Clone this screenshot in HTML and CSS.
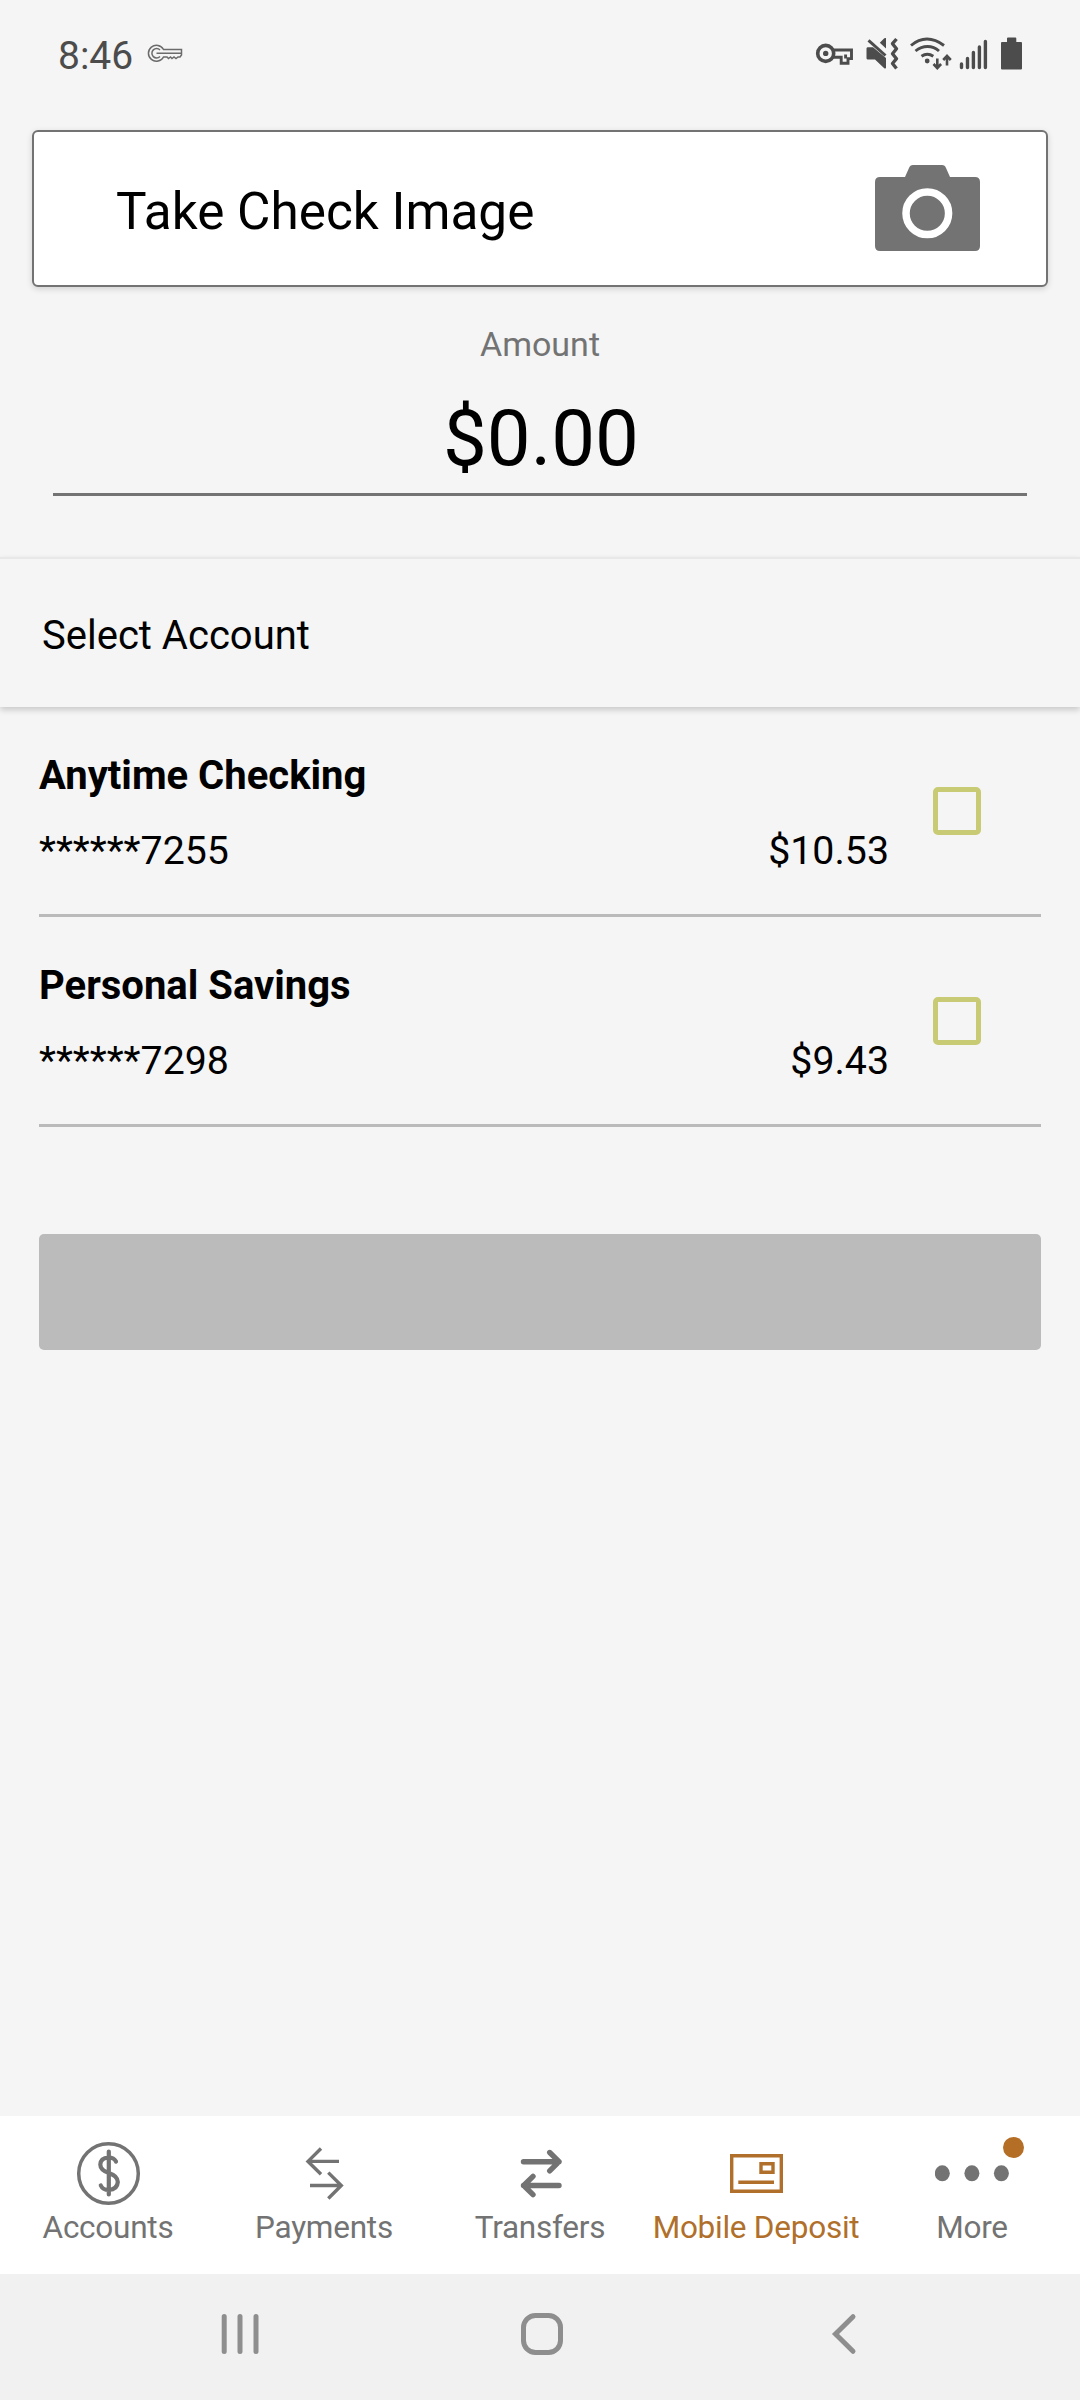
FILE: index.html
```html
<!DOCTYPE html>
<html lang="en">

<head>
    <meta charset="UTF-8">
    <meta name="viewport" content="width=device-width, initial-scale=1.0">
    <title>Mobile Deposit</title>
    <link rel="stylesheet" href="styles.css">
</head>

<body>

    <!-- Status bar -->
    <header class="status-bar">
        <span class="time">8:46</span>
        <svg class="key-outline" width="37" height="20" viewBox="0 0 37 20">
            <path d="M16.5 6.500A8 8 0 1 0 16.500 14H20l1.500 1.500L23.500 14l1.500 1.500L27 14l2 1.500L31 14h2l1.500-2V6.500z" />
            <path d="M13 7a4.700 4.700 0 1 0 0 6.500M9.500 10.300H34" />
        </svg>
        <div class="status-icons">
            <svg width="47" height="36" viewBox="0 0 47 36">
                <circle cx="10.700" cy="18.400" r="8" class="line" stroke-width="3.600" />
                <circle cx="10.700" cy="18.400" r="2.700" />
                <path d="M18 15H36.500V23.600H33V28.200H26.200V22.300H18M30.600 19.500v4" class="line" stroke-width="2.900" />
            </svg>
            <svg width="44" height="36" viewBox="0 0 44 36">
                <path d="M5.500 12.200h5.500L24 23v10.300l-1.500.3L13 24.500H5.500q-1-.2-1-1.200V13.400q0-1 1-1.200zM24 3v10.500L17.800 7.700l4.500-4.400z" />
                <path d="M6.500 5.300L23.500 20.500" class="line" stroke-width="3" />
                <path d="M34.500 4L30.500 8.700l4 5-4 5 4 5-4 4.800 4 5" class="line" stroke-width="3.400" stroke-linejoin="round" />
            </svg>
            <svg width="50" height="36" viewBox="0 0 50 36">
                <path d="M5 10.500Q12.500 4 21 4t17 6.500M9.500 16Q15 11.500 21.500 11.500T33 16M15.500 21.300Q21.300 17.200 27.300 21.300" class="line" stroke-width="2.900" />
                <circle cx="21.200" cy="26" r="2.400" />
                <path d="M31.300 23.500v9M27.500 29l3.800 4 3.800-4M41 30.500v-9M37.200 25l3.800-4 3.800 4" class="line" stroke-width="2.600" />
            </svg>
            <svg width="39" height="36" viewBox="0 0 39 36">
                <path d="M5.500 29v3.500M11.500 23.500v9M17.400 17.500v15M23.400 12v20.500M29.400 6.500v26" class="line" stroke-width="3.400" stroke-linecap="round" />
            </svg>
            <svg width="30" height="36" viewBox="0 0 30 36">
                <path d="M12 7V3.500q0-1 1-1h7.300q1 0 1 1V7H26q1 0 1 1v25.500q0 1-1 1H7q-1 0-1-1V8q0-1 1-1z" />
            </svg>
        </div>
    </header>

    <main>
        <!-- Check image -->
        <button type="button" class="check-card">
            <span>Take Check Image</span>
            <svg width="105" height="87" viewBox="0 0 105 87">
                <path d="M5 12h25l4-9q1-3 4-3h29q3 0 4 3l4 9h25q5 0 5 5v64q0 5-5 5H5q-5 0-5-5V17q0-5 5-5z" fill="#737373" />
                <circle cx="52.300" cy="48.300" r="21.300" fill="none" stroke="#fff" stroke-width="7.500" />
            </svg>
        </button>

        <!-- Amount -->
        <section class="amount">
            <div class="amount-label">Amount</div>
            <div class="amount-value">$0.00</div>
        </section>

        <!-- Accounts -->
        <h2 class="select-header">Select Account</h2>

        <div class="accounts">
            <div class="account">
                <div class="account-details">
                    <div class="account-name">Anytime Checking</div>
                    <div class="account-line">
                        <span>******7255</span>
                        <span>$10.53</span>
                    </div>
                </div>
                <div class="checkbox"></div>
            </div>
            <div class="account">
                <div class="account-details">
                    <div class="account-name">Personal Savings</div>
                    <div class="account-line">
                        <span>******7298</span>
                        <span>$9.43</span>
                    </div>
                </div>
                <div class="checkbox"></div>
            </div>
        </div>

        <button type="button" class="btn-submit" disabled></button>
    </main>

    <!-- Tabs -->
    <nav class="tabs">
        <a class="tab">
            <svg width="72" height="72" viewBox="0 0 72 72" stroke-width="3.500">
                <circle cx="36.500" cy="36.500" r="29.800" />
                <path d="M36.800 14.500v43M44 24.500q-2-4-7.500-4-8 .5-8.200 7 0 5.500 8.500 8.500 9 3 9 9-.5 7.500-9 8-6 0-8-4.500" stroke-width="4.200" stroke-linecap="round" />
            </svg>
            <span>Accounts</span>
        </a>
        <a class="tab">
            <svg width="72" height="72" viewBox="0 0 72 72" stroke-width="3.400">
                <path d="M51 24.400H19.500M33 11.500L20 24.400 33 37.300M22 48.500h31.500M40.300 35.600l13 12.900-13 13" />
            </svg>
            <span>Payments</span>
        </a>
        <a class="tab">
            <svg width="72" height="72" viewBox="0 0 72 72" stroke-width="5.400" stroke-linecap="round" stroke-linejoin="round">
                <path d="M19.500 24.700H55M45.700 15.500l9.300 9.200-9.300 9.200M55 48.500H19.500M29 39.300l-9.300 9.200 9.300 9.200" />
            </svg>
            <span>Transfers</span>
        </a>
        <a class="tab active">
            <svg width="72" height="72" viewBox="0 0 72 72" stroke-width="3.400">
                <path d="M11.700 18.700h49.600v35.600h-49.600zM18.300 45.300H54M41 26.700h12v8.600H41z" />
            </svg>
            <span>Mobile Deposit</span>
        </a>
        <a class="tab">
            <svg width="74" height="72" viewBox="-1 0 74 72">
                <g class="dots">
                    <ellipse cx="6.300" cy="36.300" rx="7.500" ry="8" />
                    <ellipse cx="35.900" cy="36.300" rx="7.500" ry="8" />
                    <ellipse cx="65.400" cy="36.300" rx="7.500" ry="8" />
                </g>
            </svg>
            <span>More</span>
            <i class="badge"></i>
        </a>
    </nav>

    <!-- System navigation -->
    <footer class="system-nav">
        <svg width="48" height="48" viewBox="0 0 48 48">
            <path d="M8.200 6.500v35M24 6.500v35M40 6.500v35" />
        </svg>
        <svg width="48" height="48" viewBox="0 0 48 48">
            <rect x="5.500" y="5.500" width="37" height="37" rx="12" />
        </svg>
        <svg width="48" height="48" viewBox="0 0 48 48">
            <path d="M34 6.700L16.500 24 34 41.300" />
        </svg>
    </footer>

</body>

</html>
```
FILE: styles.css
```css
* {
    margin: 0;
    padding: 0;
    box-sizing: border-box;
    font-family: Roboto, sans-serif;
}

body {
    display: flex;
    flex-direction: column;
    height: 2400px;
    background-color: #f5f5f5;
    color: #000;
}

svg {
    display: block;
}

main {
    flex: 1;
}

/* Status bar */
.status-bar {
    display: flex;
    height: 130px;
    padding: 35px 55px 0 58px;
    color: #4c4c4c;
}

.time {
    font-size: 39px;
    line-height: 42px;
}

.key-outline {
    margin: 8px 0 0 14px;
    fill: none;
    stroke: #6b6b6b;
    stroke-width: 1.5;
}

.status-icons {
    display: flex;
    margin-left: auto;
    fill: #4c4c4c;
}

.status-icons .line {
    fill: none;
    stroke: #4c4c4c;
}

/* Check image */
.check-card {
    display: flex;
    justify-content: space-between;
    align-items: center;
    width: 1016px;
    height: 157px;
    margin: 0 32px;
    padding: 0 66px 0 82px;
    background-color: white;
    border: 2px solid #737373;
    border-radius: 6px;
    box-shadow: 0 2px 6px rgba(0, 0, 0, 0.15);
    color: #000;
    font-size: 51.300px;
}

.check-card span {
    padding-top: 5px;
}

/* Amount */
.amount {
    margin: 0 53px 61px;
    padding: 37px 0 9px;
    border-bottom: 3px solid #737373;
    text-align: center;
}

.amount-label {
    margin-bottom: 30px;
    color: #737373;
    font-size: 34px;
    line-height: 40px;
}

.amount-value {
    padding-left: 2px;
    font-size: 78px;
    line-height: 90px;
}

/* Accounts */
.select-header {
    height: 150px;
    padding: 54px 42px 0;
    border-top: 2px solid #e8e8e8;
    box-shadow: 0 3px 6px rgba(0, 0, 0, 0.18);
    font-size: 40px;
    font-weight: 400;
    line-height: 46px;
}

.accounts {
    padding: 0 39px;
}

.account {
    display: flex;
    height: 210px;
    padding-top: 46px;
    border-bottom: 3px solid #bababa;
    line-height: 46px;
}

.account-details {
    width: 850px;
}

.account-name {
    margin-bottom: 29px;
    font-size: 40px;
    font-weight: 700;
}

.account-line {
    display: flex;
    justify-content: space-between;
    font-size: 39.300px;
}

.checkbox {
    width: 48px;
    height: 48px;
    margin: 34px 0 0 44px;
    border: 5px solid #c8cb73;
    border-radius: 5px;
}

.btn-submit {
    display: block;
    width: 1002px;
    height: 116px;
    margin: 107px 39px 0;
    background-color: #bbb;
    border: none;
    border-radius: 5px;
}

/* Tabs */
.tabs {
    display: flex;
    height: 158px;
    background-color: white;
}

.tab {
    position: relative;
    display: flex;
    flex-direction: column;
    align-items: center;
    flex: 1;
    padding-top: 21px;
    color: #737373;
    font-size: 31.500px;
    letter-spacing: -0.25px;
    line-height: 38px;
    white-space: nowrap;
}

.tab svg {
    fill: none;
    stroke: currentColor;
}

.tab.active {
    color: #b06f2a;
}

.tab .dots {
    fill: #737373;
    stroke: none;
}

.badge {
    position: absolute;
    top: 21px;
    right: 56px;
    width: 21px;
    height: 21px;
    background-color: #b46e26;
    border-radius: 50%;
}

/* System navigation */
.system-nav {
    display: flex;
    justify-content: space-between;
    height: 126px;
    padding: 36px 213px 0 216px;
    background-color: #f1f1f1;
}

.system-nav svg {
    fill: none;
    stroke: #8e8e8e;
    stroke-width: 5;
    stroke-linecap: round;
}
```
